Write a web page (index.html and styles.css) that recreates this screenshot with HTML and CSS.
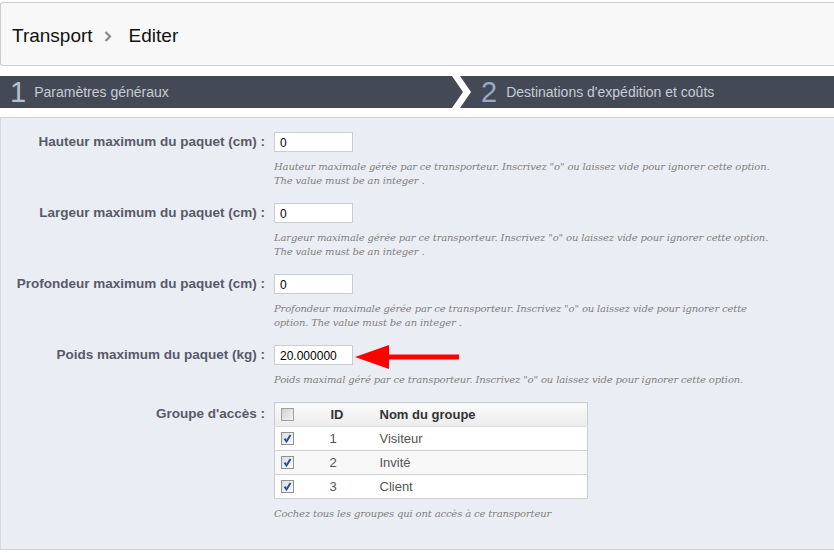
FILE: index.html
```html
<!DOCTYPE html>
<html lang="fr">
<head>
<meta charset="utf-8">
<title>Transport - Editer</title>
<link rel="stylesheet" href="styles.css">
</head>
<body>
<div class="toolbar">
  <h2 class="crumbs">
    <span>Transport</span>
    <svg class="crumb-sep" width="8" height="11" viewBox="0 0 8 11"><polyline points="1.5,1 6,5.5 1.5,10" fill="none" stroke="#8a8a8a" stroke-width="2.2"/></svg>
    <span>Editer</span>
  </h2>
</div>

<div class="steps">
  <div class="step step-first">
    <span class="step-num">1</span>
    <span class="step-label">Paramètres généraux</span>
  </div>
  <div class="step step-current">
    <svg class="step-chevron" width="20" height="32" viewBox="0 0 20 32"><polygon points="0,0 8,0 19,16 8,32 0,32 11,16" fill="#ffffff"/></svg>
    <span class="step-num step-num-current">2</span>
    <span class="step-label">Destinations d'expédition et coûts</span>
  </div>
</div>

<div class="panel">
  <div class="row">
    <label class="row-label">Hauteur maximum du paquet (cm) :</label>
    <div class="row-field">
      <input class="text-input" type="text" value="0">
      <p class="help">Hauteur maximale gérée par ce transporteur. Inscrivez "o" ou laissez vide pour ignorer cette option. The value must be an integer .</p>
    </div>
  </div>
  <div class="row">
    <label class="row-label">Largeur maximum du paquet (cm) :</label>
    <div class="row-field">
      <input class="text-input" type="text" value="0">
      <p class="help">Largeur maximale gérée par ce transporteur. Inscrivez "o" ou laissez vide pour ignorer cette option. The value must be an integer .</p>
    </div>
  </div>
  <div class="row">
    <label class="row-label">Profondeur maximum du paquet (cm) :</label>
    <div class="row-field">
      <input class="text-input" type="text" value="0">
      <p class="help">Profondeur maximale gérée par ce transporteur. Inscrivez "o" ou laissez vide pour ignorer cette option. The value must be an integer .</p>
    </div>
  </div>
  <div class="row">
    <label class="row-label">Poids maximum du paquet (kg) :</label>
    <div class="row-field">
      <div class="input-wrap">
        <input class="text-input" type="text" value="20.000000">
        <svg class="arrow" width="106" height="26" viewBox="0 0 106 26"><polygon points="0,13 34,1 34,10.5 104,10.5 104,15.5 34,15.5 34,25" fill="#ff0000"/></svg>
      </div>
      <p class="help">Poids maximal géré par ce transporteur. Inscrivez "o" ou laissez vide pour ignorer cette option.</p>
    </div>
  </div>
  <div class="row row-groups">
    <label class="row-label row-label-table">Groupe d'accès :</label>
    <div class="row-field">
      <table class="groups">
        <thead>
          <tr>
            <th class="c-check"><span class="cb cb-empty"></span></th>
            <th class="c-id">ID</th>
            <th class="c-name">Nom du groupe</th>
          </tr>
        </thead>
        <tbody>
          <tr>
            <td class="c-check"><span class="cb"><svg width="11" height="11" viewBox="0 0 11 11"><path d="M2.5 5.5 L4.5 8.5 L8.5 2" fill="none" stroke="#2e4a9a" stroke-width="2"/></svg></span></td>
            <td class="c-id">1</td>
            <td class="c-name">Visiteur</td>
          </tr>
          <tr class="alt">
            <td class="c-check"><span class="cb"><svg width="11" height="11" viewBox="0 0 11 11"><path d="M2.5 5.5 L4.5 8.5 L8.5 2" fill="none" stroke="#2e4a9a" stroke-width="2"/></svg></span></td>
            <td class="c-id">2</td>
            <td class="c-name">Invité</td>
          </tr>
          <tr>
            <td class="c-check"><span class="cb"><svg width="11" height="11" viewBox="0 0 11 11"><path d="M2.5 5.5 L4.5 8.5 L8.5 2" fill="none" stroke="#2e4a9a" stroke-width="2"/></svg></span></td>
            <td class="c-id">3</td>
            <td class="c-name">Client</td>
          </tr>
        </tbody>
      </table>
      <p class="help help-table">Cochez tous les groupes qui ont accès à ce transporteur</p>
    </div>
  </div>
</div>
</body>
</html>
```

FILE: styles.css
```css
html, body {
  margin: 0;
  padding: 0;
  background: #ffffff;
}

body {
  font-family: "Liberation Sans", Arial, sans-serif;
  width: 834px;
  height: 553px;
  overflow: hidden;
}

/* breadcrumb toolbar */
.toolbar {
  margin-top: 2px;
  height: 62px;
  background: #f8f8f8;
  border: 1px solid #cccccc;
  border-right: none;
  border-radius: 3px 0 0 3px;
  display: flex;
  align-items: center;
  padding-left: 11px;
}

.crumbs {
  margin: 0;
  font-size: 19px;
  font-weight: normal;
  color: #111111;
  display: flex;
  align-items: center;
  padding-top: 3px;
}

.crumb-sep {
  margin: 2px 17px 0 11px;
}

/* step bar */
.steps {
  margin-top: 10px;
  height: 32px;
  background: #434a56;
  display: flex;
}

.step {
  display: flex;
  align-items: center;
  height: 32px;
}

.step-first {
  width: 452px;
  padding-left: 10px;
  box-sizing: border-box;
}

.step-chevron {
  display: block;
  margin-right: 9px;
}

.step-num {
  font-size: 29px;
  line-height: 32px;
  color: #b9c0cb;
  margin-right: 8px;
}

.step-num-current {
  color: #97a9c4;
  margin-right: 9px;
}

.step-label {
  font-size: 14px;
  color: #c7ccd4;
  margin-top: -1px;
}

/* panel */
.panel {
  margin-top: 9px;
  height: 417px;
  background: #ebedf4;
  border-top: 1px solid #cfd1d6;
  border-bottom: 1px solid #cfd1d6;
  border-left: 1px solid #d6d8de;
  padding-top: 14px;
}

.row {
  display: grid;
  grid-template-columns: 264px 1fr;
  column-gap: 9px;
  margin-bottom: 15px;
}

.row-label {
  text-align: right;
  font-size: 13.5px;
  font-weight: bold;
  color: #585a69;
  line-height: 20px;
  white-space: nowrap;
}

.row-label-table {
  line-height: 24px;
}

.row-groups {
  margin-top: 1px;
}

.row-field {
  min-width: 0;
}

.input-wrap {
  position: relative;
  width: 79px;
  height: 20px;
}

.text-input {
  display: block;
  box-sizing: border-box;
  width: 79px;
  height: 20px;
  margin: 0;
  padding: 1px 4px 0 5px;
  border: 1px solid #cccccc;
  background: #ffffff;
  font-family: "Liberation Sans", Arial, sans-serif;
  font-size: 12px;
  color: #000000;
  outline: none;
}

.arrow {
  position: absolute;
  left: 81px;
  top: -1px;
}

.help {
  margin: 8px 0 0 0;
  width: 505px;
  font-family: "DejaVu Serif", Georgia, serif;
  font-style: italic;
  font-size: 10px;
  letter-spacing: -0.15px;
  line-height: 14px;
  color: #7f7f7f;
}

.help-table {
  margin-top: 8px;
}

/* groups table */
.groups {
  border-collapse: collapse;
  width: 314px;
  border: 1px solid #cccccc;
  background: #ffffff;
  font-size: 13px;
}

.groups th {
  height: 23px;
  padding: 0;
  text-align: left;
  font-weight: bold;
  color: #333333;
  background: linear-gradient(#fafafa, #ececec);
  border-bottom: 1px solid #dcdcdc;
}

.groups td {
  height: 23px;
  padding: 0;
  color: #555555;
  border-bottom: 1px solid #d3d3d3;
}

.groups tr.alt td {
  background: #f8f8f8;
}

.groups .c-check {
  width: 49px;
  padding-left: 6px;
  box-sizing: border-box;
}

.groups .c-id {
  width: 49px;
  padding-left: 7px;
  box-sizing: border-box;
}

.groups td.c-id {
  padding-left: 6px;
}

.groups .c-name {
  padding-left: 7px;
}

.cb {
  display: block;
  box-sizing: border-box;
  width: 13px;
  height: 13px;
  border: 1px solid #8f9294;
  background: linear-gradient(135deg, #dcdcdc, #ffffff);
  position: relative;
}

.cb svg {
  display: block;
}

.cb-empty {
  background: linear-gradient(135deg, #d2d2d2, #f4f4f4);
  border-color: #a0a0a0;
}
```
